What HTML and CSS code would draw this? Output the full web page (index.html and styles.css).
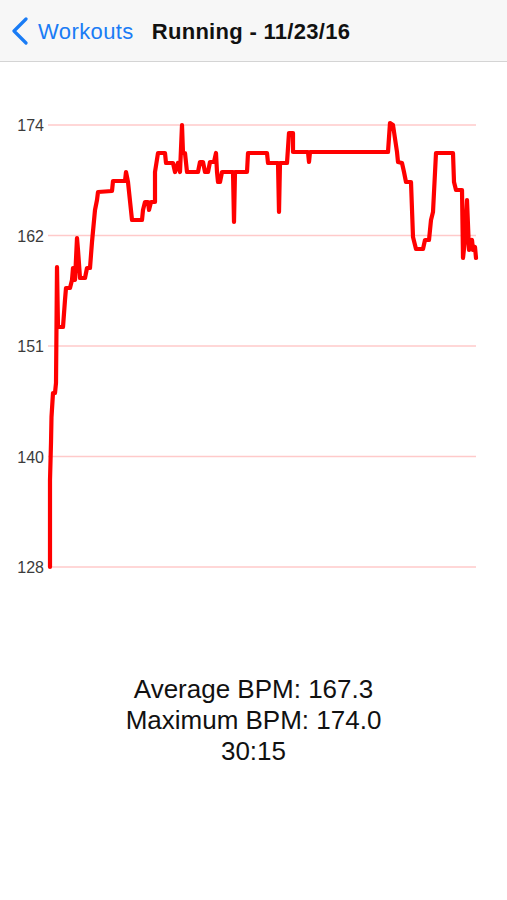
FILE: index.html
```html
<!DOCTYPE html>
<html lang="en">

<head>
    <title>Running - 11/23/16</title>
    <link rel="stylesheet" href="styles.css">
</head>

<body>
    <header class="nav">
        <a class="back" href="#">
            <svg class="chevron" width="18" height="28" viewBox="0 0 18 28">
                <path d="M15 2 L3 14 L15 26" />
            </svg>
            <span>Workouts</span>
        </a>
        <h1 class="title">Running - 11/23/16</h1>
    </header>

    <div class="chart">
        <svg width="507" height="560" viewBox="0 62 507 560">
            <g class="grid">
                <line x1="48" y1="125" x2="476" y2="125" />
                <line x1="48" y1="235.5" x2="476" y2="235.5" />
                <line x1="48" y1="346" x2="476" y2="346" />
                <line x1="48" y1="456.5" x2="476" y2="456.5" />
                <line x1="48" y1="567" x2="476" y2="567" />
            </g>
            <g class="labels">
                <text x="44" y="131">174</text>
                <text x="44" y="241.5">162</text>
                <text x="44" y="352">151</text>
                <text x="44" y="462.5">140</text>
                <text x="44" y="573">128</text>
            </g>
            <path class="bpm" d="M50,567 L50,480 L51,443 L51.5,417 L53,393 L55,393 L56,383 L57,267 L58,327 L63,327 L65,300 L66,288 L70,288 L72,280 L73,268 L75,280 L77,238 L78,250 L80,278 L85,278 L87,268 L90,268 L92,242 L95,210 L97,200 L98,192 L112,191 L113,181 L125,181 L126,172 L128,182 L132,220 L142,220 L143,210 L145,202 L148,202 L149,210 L151,202 L155,202 L155,172 L158,153 L165,153 L166,163 L173,163 L175,172 L178,163 L180,172 L182,125 L183,153 L185,153 L187,172 L198,172 L200,162 L203,162 L205,172 L208,172 L210,162 L214,162 L216,153 L217,172 L218,182 L220,182 L222,172 L233,172 L234,222 L235,172 L247,172 L248,153 L267,153 L268,163 L278,163 L279,212 L280,163 L287,163 L289,133 L293,133 L293,152 L308,152 L309,162 L310,152 L388,152 L390,123 L393,125 L397,152 L398,162 L402,163 L404,172 L406,182 L411,182 L413,237 L416,249 L423,249 L425,240 L429,240 L431,220 L433,212 L436,153 L453,153 L454,182 L456,190 L462,190 L463,258 L465,240 L467,200 L469,250 L470,245 L472,240 L473,250 L475,247 L476,258" />
        </svg>
    </div>

    <div class="stats">
        <div>Average BPM: 167.3</div>
        <div>Maximum BPM: 174.0</div>
        <div>30:15</div>
    </div>
</body>

</html>
```

FILE: styles.css
```css
body {
    margin: 0;
    background: #fff;
    font-family: "Liberation Sans", Arial, sans-serif;
}

.nav {
    display: flex;
    align-items: center;
    height: 61px;
    padding-left: 11px;
    background: #f7f7f7;
    border-bottom: 1px solid #d4d4d4;
}

.back {
    display: flex;
    align-items: center;
    gap: 9px;
    color: #1a7cf5;
    text-decoration: none;
    font-size: 22px;
    letter-spacing: 0.4px;

    & span {
        padding-top: 2px;
    }
}

.chevron path {
    fill: none;
    stroke: #1a7cf5;
    stroke-width: 3.2;
    stroke-linecap: round;
    stroke-linejoin: round;
}

.title {
    margin: 0 0 0 18px;
    padding-top: 2px;
    font-size: 22px;
    font-weight: bold;
    letter-spacing: 0.3px;
    color: #111;
}

.chart svg {
    display: block;
}

.grid line {
    stroke: #ffcaca;
    stroke-width: 1.4;
}

.labels text {
    font-family: "Liberation Sans", Arial, sans-serif;
    font-size: 16px;
    fill: #3b3b3b;
    text-anchor: end;
}

.bpm {
    fill: none;
    stroke: #ff0000;
    stroke-width: 4.2;
    stroke-linejoin: round;
    stroke-linecap: round;
}

.stats {
    padding-top: 52px;
    text-align: center;
    font-size: 26px;
    line-height: 31px;
    color: #111;
}
```
